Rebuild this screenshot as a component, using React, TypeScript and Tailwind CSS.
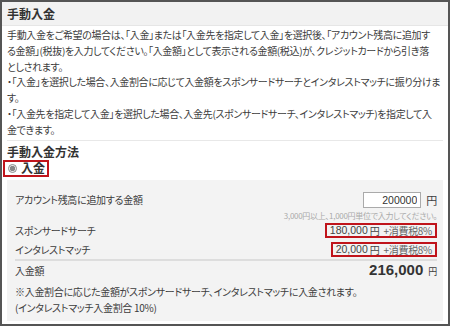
import { useState } from "react";

const jp = "font-['Noto_Sans_CJK_JP','Noto_Sans',sans-serif] [font-feature-settings:'palt']";

function Amount({ value }: { value: string }) {
  return (
    <span className="inline-flex h-[15px] items-center border-2 border-[#c0141b] px-[3px] text-[10px] leading-none tracking-[-0.3px]">
      <span className="font-['Liberation_Sans',sans-serif] text-[10.5px] tracking-normal text-[#444]">{value}</span>
      <span className="ml-[2px] text-[#444]">円</span>
      <span className="ml-[4px] text-[#666]">+消費税8%</span>
    </span>
  );
}

export default function App() {
  const [method, setMethod] = useState("deposit");
  const [amount, setAmount] = useState("200000");

  return (
    <div className={`h-[326px] w-[450px] overflow-hidden border-2 border-[#555] bg-white text-[#3c3c3c] ${jp}`}>
      <div className="flex h-[24px] items-center border-b border-[#e6e6e6] bg-[#f2f2f2] px-[5px] text-[12px] font-bold text-[#333]">
        手動入金
      </div>

      <div className="px-[5px]">
        <p className="whitespace-nowrap pt-[1px] text-[10px] leading-[15.8px] tracking-[-0.35px]">
          手動入金をご希望の場合は、「入金」または「入金先を指定して入金」を選択後、「アカウント残高に追加す
          <br />
          る金額」(税抜)を入力してください。「入金額」として表示される金額(税込)が、クレジットカードから引き落
          <br />
          としされます。
          <br />
          ・「入金」を選択した場合、入金割合に応じて入金額をスポンサードサーチとインタレストマッチに振り分けま
          <br />
          す。
          <br />
          ・「入金先を指定して入金」を選択した場合、入金先(スポンサードサーチ、インタレストマッチ)を指定して入
          <br />
          金できます。
        </p>

        <div className="mt-[2px] border-t border-[#e8e8e8] pt-[3px]">
          <div className="text-[12px] font-bold leading-[16px] text-[#333]">手動入金方法</div>
          <label className="ml-[-4px] flex h-[17px] w-fit items-center gap-[4px] whitespace-nowrap border-2 border-[#c0141b] pl-[3px] pr-[2px]">
            <input
              type="radio"
              checked={method === "deposit"}
              onChange={() => setMethod("deposit")}
              className="m-0 h-[9px] w-[9px] accent-[#888]"
            />
            <span className="text-[12px] font-bold leading-none text-[#333]">入金</span>
          </label>
        </div>

        <div className="mt-[3px] h-[141px] bg-[#f3f3f3] pl-[8px] pr-[6px] pt-[12px] text-[10px] tracking-[-0.3px]">
          <div className="flex items-center justify-between">
            <span>アカウント残高に追加する金額</span>
            <span className="flex items-center">
              <input
                value={amount}
                onChange={(e) => setAmount(e.target.value)}
                className="h-[16px] w-[58px] border border-[#aaa] bg-white px-[3px] text-right font-['Liberation_Sans',sans-serif] text-[10.5px] tracking-normal text-[#333] outline-none"
              />
              <span className="ml-[5px] text-[11px]">円</span>
            </span>
          </div>
          <div className="mt-[2px] text-right text-[8px] leading-[12px] text-[#aaa]">
            3,000円以上、1,000円単位で入力してください。
          </div>

          <div className="mt-[1px] flex items-center justify-between">
            <span>スポンサードサーチ</span>
            <Amount value="180,000" />
          </div>
          <div className="mt-[4px] flex items-center justify-between">
            <span>インタレストマッチ</span>
            <Amount value="20,000" />
          </div>

          <div className="mt-[2px] flex h-[20px] items-center justify-between border-t-2 border-[#ddd]">
            <span>入金額</span>
            <span className="flex items-baseline">
              <span className="font-['Liberation_Sans',sans-serif] text-[15px] font-bold tracking-normal text-[#333]">216,000</span>
              <span className="ml-[5px] text-[9px]">円</span>
            </span>
          </div>

          <p className="mt-[5px] leading-[16px]">
            ※入金割合に応じた金額がスポンサードサーチ、インタレストマッチに入金されます。
            <br />
            (インタレストマッチ入金割合 10%)
          </p>
        </div>
      </div>
    </div>
  );
}
